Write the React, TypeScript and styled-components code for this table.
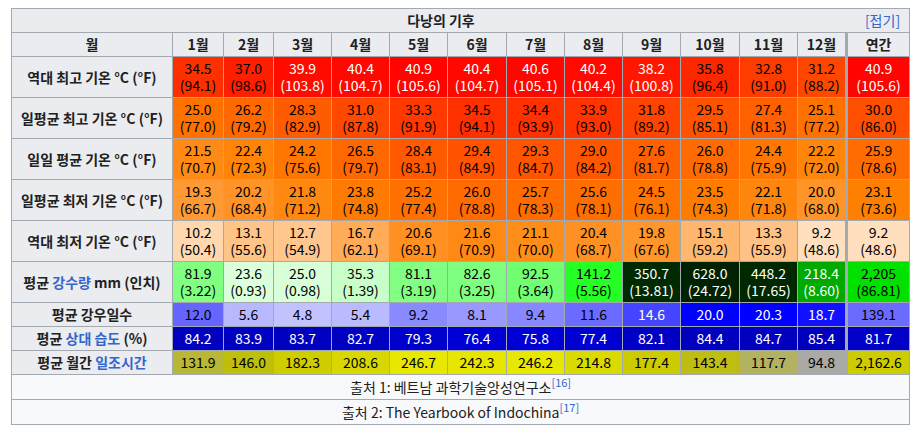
import React from "react";
import styled, { createGlobalStyle } from "styled-components";

const GlobalStyle = createGlobalStyle`
  html, body {
    margin: 0;
    background: #ffffff;
  }
  body {
    font-family: "Noto Sans CJK KR", "Noto Sans", sans-serif;
    color: #202122;
  }
`;

const Page = styled.div`
  padding: 8px 10px 7px 11px;
`;

const ClimateTable = styled.table`
  width: 898px;
  border-collapse: collapse;
  table-layout: fixed;
  font-size: 14px;
  line-height: 17px;
  border: 1px solid #a2a9b1;
`;

const Col = styled.col<{ $w: number }>`
  width: ${(p) => p.$w}px;
`;

const TitleCell = styled.th`
  background: #eaecf0;
  border: 1px solid #a2a9b1;
  padding: 3px 9px 3px 5px;
  text-align: center;
  font-weight: bold;
`;

const Toggle = styled.span`
  float: right;
  font-weight: normal;
  color: #3366cc;
`;

const HeadCell = styled.th<{ $annual?: boolean }>`
  background: #eaecf0;
  border: 1px solid #a2a9b1;
  border-left: ${(p) => (p.$annual ? "3px" : "1px")} solid #a2a9b1;
  padding: 3px 2px;
  text-align: center;
  font-weight: bold;
  white-space: nowrap;
`;

const RowLabel = styled.th`
  background: #eaecf0;
  border: 1px solid #a2a9b1;
  padding: 3px 4px;
  text-align: center;
  font-weight: bold;
  white-space: nowrap;
`;

const DataCell = styled.td<{ $bg: string; $fg: string; $annual?: boolean }>`
  background: ${(p) => p.$bg};
  color: ${(p) => p.$fg};
  border: 1px solid #a2a9b1;
  border-left: ${(p) => (p.$annual ? "3px" : "1px")} solid #a2a9b1;
  padding: 3px 1px;
  text-align: center;
  white-space: nowrap;
`;

const WikiLink = styled.span`
  color: #3366cc;
`;

const SourceCell = styled.td`
  background: #f8f9fa;
  border: 1px solid #a2a9b1;
  padding: 4px 4px 3px;
  text-align: center;
`;

const Ref = styled.sup`
  color: #3366cc;
  font-size: 11px;
  line-height: 0;
  vertical-align: 6px;
`;

const clamp = (v: number) => Math.round(Math.max(0, Math.min(255, v)));
const rgb = (r: number, g: number, b: number) => `rgb(${clamp(r)}, ${clamp(g)}, ${clamp(b)})`;

type Kind = "temp" | "precip" | "days" | "humid" | "sun";

// colour scales, close to the wikipedia weather box ones
function cellColors(kind: Kind, v: number): { bg: string; fg: string } {
  switch (kind) {
    case "temp": {
      const r = v < 4.5 ? (255 * (v + 42.75)) / 47.25 : (255 * (v - 60)) / (41.5 - 60);
      const g = v <= 4.5 ? (255 * (v + 42.75)) / 47.25 : (255 * (v - 41.5)) / (4.5 - 41.5);
      const b = (255 * (v - 23)) / (4.5 - 23);
      return { bg: rgb(r, g, b), fg: v >= 37.8 ? "#ffffff" : "#000000" };
    }
    case "precip": {
      if (v <= 165) {
        const rb = (255 * (165 - v)) / 165;
        return { bg: rgb(rb, 255, rb), fg: "#000000" };
      }
      let g = 255 - (v - 165) * 1.6;
      if (v > 300) g = 44 - (v - 300) * 0.03;
      return { bg: rgb(0, g, 0), fg: g < 190 ? "#ffffff" : "#000000" };
    }
    case "days": {
      const rg = 255 * (1 - v / 20);
      return { bg: rgb(rg, rg, 255), fg: v >= 13.5 ? "#ffffff" : "#000000" };
    }
    case "humid": {
      const b = 255 - (v - 60) * 2.625;
      return { bg: rgb(0, 0, b), fg: "#ffffff" };
    }
    case "sun": {
      const rg = 130 + 0.41 * v;
      const b = (150 - v) * 3;
      return { bg: rgb(rg, rg, b), fg: "#000000" };
    }
  }
}

interface ClimateRow {
  label: React.ReactNode;
  kind: Kind;
  main: string[];
  sub?: string[];
}

const months = ["1월", "2월", "3월", "4월", "5월", "6월", "7월", "8월", "9월", "10월", "11월", "12월"];
const colWidths = [161, 51, 50, 58, 58, 58, 59, 58, 58, 58, 59, 58, 49, 63];

const rows: ClimateRow[] = [
  {
    label: "역대 최고 기온 °C (°F)",
    kind: "temp",
    main: ["34.5", "37.0", "39.9", "40.4", "40.9", "40.4", "40.6", "40.2", "38.2", "35.8", "32.8", "31.2", "40.9"],
    sub: ["94.1", "98.6", "103.8", "104.7", "105.6", "104.7", "105.1", "104.4", "100.8", "96.4", "91.0", "88.2", "105.6"],
  },
  {
    label: "일평균 최고 기온 °C (°F)",
    kind: "temp",
    main: ["25.0", "26.2", "28.3", "31.0", "33.3", "34.5", "34.4", "33.9", "31.8", "29.5", "27.4", "25.1", "30.0"],
    sub: ["77.0", "79.2", "82.9", "87.8", "91.9", "94.1", "93.9", "93.0", "89.2", "85.1", "81.3", "77.2", "86.0"],
  },
  {
    label: "일일 평균 기온 °C (°F)",
    kind: "temp",
    main: ["21.5", "22.4", "24.2", "26.5", "28.4", "29.4", "29.3", "29.0", "27.6", "26.0", "24.4", "22.2", "25.9"],
    sub: ["70.7", "72.3", "75.6", "79.7", "83.1", "84.9", "84.7", "84.2", "81.7", "78.8", "75.9", "72.0", "78.6"],
  },
  {
    label: "일평균 최저 기온 °C (°F)",
    kind: "temp",
    main: ["19.3", "20.2", "21.8", "23.8", "25.2", "26.0", "25.7", "25.6", "24.5", "23.5", "22.1", "20.0", "23.1"],
    sub: ["66.7", "68.4", "71.2", "74.8", "77.4", "78.8", "78.3", "78.1", "76.1", "74.3", "71.8", "68.0", "73.6"],
  },
  {
    label: "역대 최저 기온 °C (°F)",
    kind: "temp",
    main: ["10.2", "13.1", "12.7", "16.7", "20.6", "21.6", "21.1", "20.4", "19.8", "15.1", "13.3", "9.2", "9.2"],
    sub: ["50.4", "55.6", "54.9", "62.1", "69.1", "70.9", "70.0", "68.7", "67.6", "59.2", "55.9", "48.6", "48.6"],
  },
  {
    label: (
      <>
        평균 <WikiLink>강수량</WikiLink> mm (인치)
      </>
    ),
    kind: "precip",
    main: ["81.9", "23.6", "25.0", "35.3", "81.1", "82.6", "92.5", "141.2", "350.7", "628.0", "448.2", "218.4", "2,205"],
    sub: ["3.22", "0.93", "0.98", "1.39", "3.19", "3.25", "3.64", "5.56", "13.81", "24.72", "17.65", "8.60", "86.81"],
  },
  {
    label: "평균 강우일수",
    kind: "days",
    main: ["12.0", "5.6", "4.8", "5.4", "9.2", "8.1", "9.4", "11.6", "14.6", "20.0", "20.3", "18.7", "139.1"],
  },
  {
    label: (
      <>
        평균 <WikiLink>상대 습도</WikiLink> (%)
      </>
    ),
    kind: "humid",
    main: ["84.2", "83.9", "83.7", "82.7", "79.3", "76.4", "75.8", "77.4", "82.1", "84.4", "84.7", "85.4", "81.7"],
  },
  {
    label: (
      <>
        평균 월간 <WikiLink>일조시간</WikiLink>
      </>
    ),
    kind: "sun",
    main: ["131.9", "146.0", "182.3", "208.6", "246.7", "242.3", "246.2", "214.8", "177.4", "143.4", "117.7", "94.8", "2,162.6"],
  },
];

export default function App() {
  return (
    <Page>
      <GlobalStyle />
      <ClimateTable>
        <colgroup>
          {colWidths.map((w, i) => (
            <Col key={i} $w={w} />
          ))}
        </colgroup>
        <tbody>
          <tr>
            <TitleCell colSpan={14}>
              <Toggle>[접기]</Toggle>
              다낭의 기후
            </TitleCell>
          </tr>
          <tr>
            <HeadCell>월</HeadCell>
            {months.map((m) => (
              <HeadCell key={m}>{m}</HeadCell>
            ))}
            <HeadCell $annual>연간</HeadCell>
          </tr>
          {rows.map((row, ri) => (
            <tr key={ri}>
              <RowLabel>{row.label}</RowLabel>
              {row.main.map((val, i) => {
                const annual = i === 12;
                let n = parseFloat(val.replace(/,/g, ""));
                if (annual && row.kind !== "temp" && row.kind !== "humid") n = n / 12;
                const c = cellColors(row.kind, n);
                return (
                  <DataCell key={i} $bg={c.bg} $fg={c.fg} $annual={annual}>
                    {val}
                    {row.sub && (
                      <>
                        <br />({row.sub[i]})
                      </>
                    )}
                  </DataCell>
                );
              })}
            </tr>
          ))}
          <tr>
            <SourceCell colSpan={14}>
              출처 1: 베트남 과학기술앙성연구소<Ref>[16]</Ref>
            </SourceCell>
          </tr>
          <tr>
            <SourceCell colSpan={14}>
              출처 2: The Yearbook of Indochina<Ref>[17]</Ref>
            </SourceCell>
          </tr>
        </tbody>
      </ClimateTable>
    </Page>
  );
}
